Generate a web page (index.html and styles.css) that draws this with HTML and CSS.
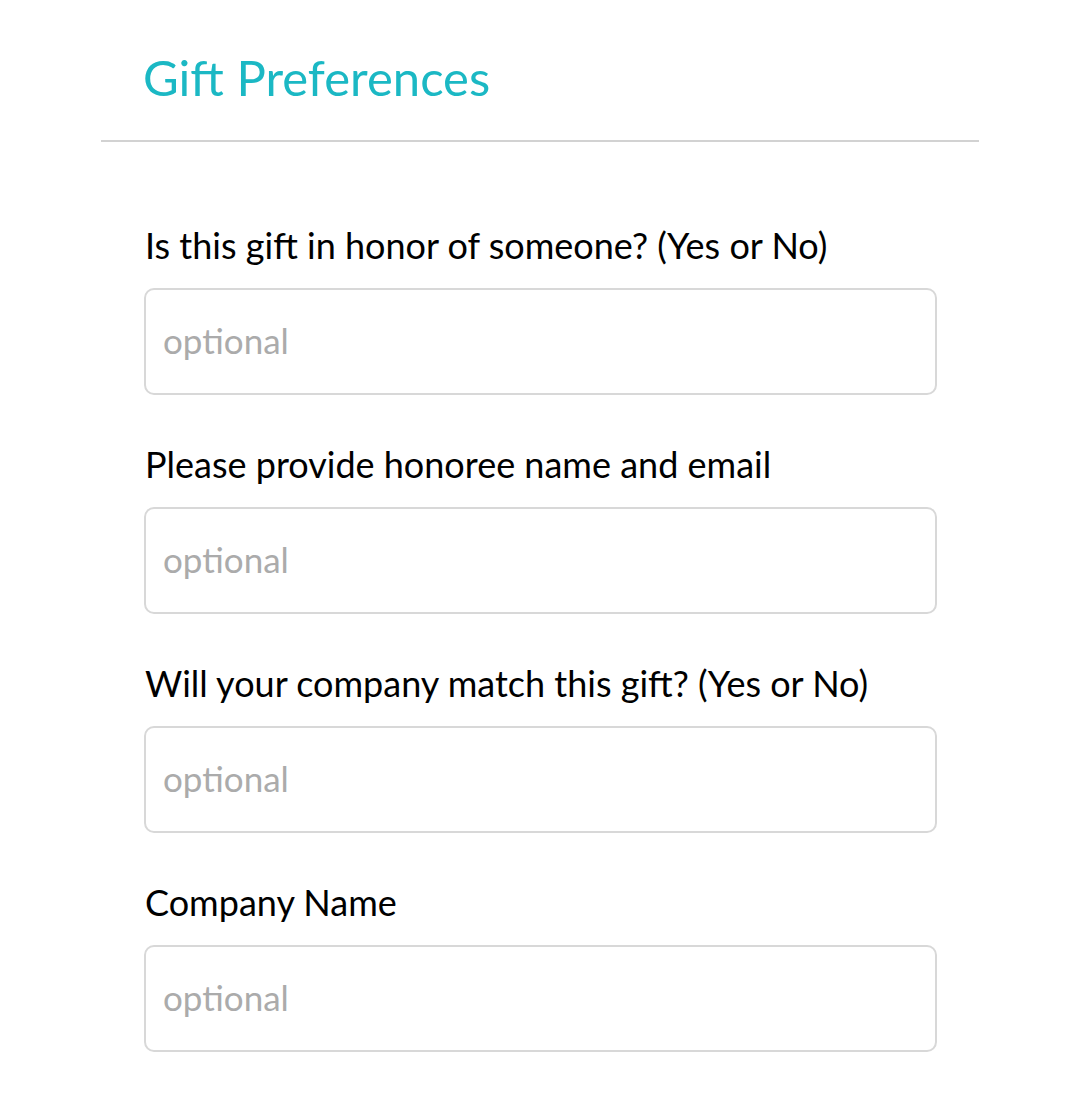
FILE: index.html
```html
<!DOCTYPE html>
<html lang="en">
<head>
<meta charset="utf-8">
<title>Gift Preferences</title>
<link rel="stylesheet" href="styles.css">
</head>
<body>
<main class="page">
  <header class="section-head">
    <h1 class="section-title">Gift Preferences</h1>
  </header>
  <form class="gift-form">
    <div class="field">
      <label class="field-label" for="f1">Is this gift in honor of someone? (Yes or No)</label>
      <input class="field-input" id="f1" type="text" placeholder="optional">
    </div>
    <div class="field">
      <label class="field-label" for="f2">Please provide honoree name and email</label>
      <input class="field-input" id="f2" type="text" placeholder="optional">
    </div>
    <div class="field">
      <label class="field-label" for="f3">Will your company match this gift? (Yes or No)</label>
      <input class="field-input" id="f3" type="text" placeholder="optional">
    </div>
    <div class="field">
      <label class="field-label" for="f4">Company Name</label>
      <input class="field-input" id="f4" type="text" placeholder="optional">
    </div>
  </form>
</main>
</body>
</html>
```

FILE: styles.css
```css
* { box-sizing: border-box; }
html, body { margin: 0; padding: 0; background: #fff; }
body { font-family: "Lato", "Open Sans", sans-serif; color: #000; }

.page {
  width: 878px;
  margin-left: 101px;
  padding-top: 44px;
}

.section-head {
  border-bottom: 2px solid #d2d2d2;
  padding: 0 0 30px 42px;
}

.section-title {
  margin: 0;
  font-weight: 400;
  font-size: 49px;
  line-height: 66px;
  color: #1bb8c4;
}

.gift-form {
  padding: 83px 42px 0 43px;
  display: flex;
  flex-direction: column;
  gap: 49px;
}

.field {
  display: flex;
  flex-direction: column;
  gap: 23px;
}

.field-label {
  font-size: 36px;
  line-height: 40px;
  color: #000;
  padding-left: 1px;
}

.field-input {
  width: 793px;
  height: 107px;
  border: 2px solid #d8d8d8;
  border-radius: 10px;
  padding: 0 0 4px 17px;
  font-family: inherit;
  font-size: 35px;
  color: #000;
  background: #fff;
  outline: none;
}

.field-input::placeholder {
  color: #ababab;
  opacity: 1;
}
```
